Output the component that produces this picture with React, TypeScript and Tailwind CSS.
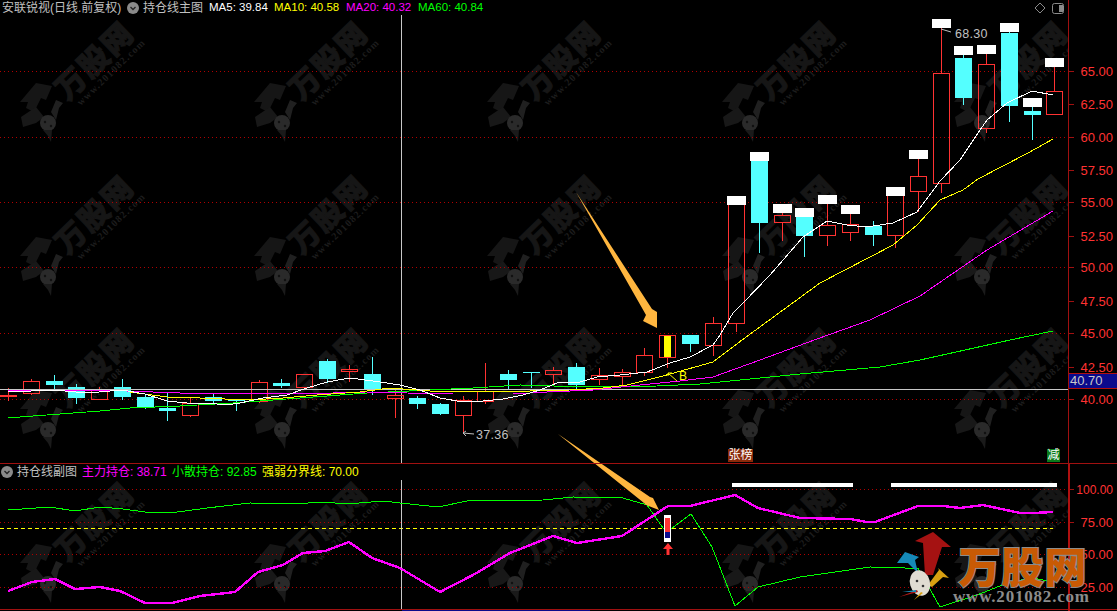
type Candle = { x: number; high: number; top: number; bot: number; low: number; up: boolean; cap?: number };

const c = (x: number, high: number, top: number, bot: number, low: number, up: boolean, cap?: number): Candle => ({ x, high, top, bot, low, up, cap });

const CANDLES: Candle[] = [
  c(8, 388, 395, 396, 401, true),
  c(31, 379, 381, 393, 395, true),
  c(54, 375, 381, 385, 390, false),
  c(76, 384, 387, 398, 404, false),
  c(99, 387, 390, 399, 399, true),
  c(122, 379, 387, 397, 400, false),
  c(145, 395, 397, 407, 409, false),
  c(167, 393, 408, 411, 421, false),
  c(190, 397, 403, 415, 417, true),
  c(213, 394, 397, 401, 403, false),
  c(236, 399, 400, 401, 411, false),
  c(259, 380, 382, 401, 403, true),
  c(281, 379, 383, 386, 388, false),
  c(304, 374, 374, 387, 388, true),
  c(327, 359, 361, 379, 383, false),
  c(349, 365, 369, 371, 382, true),
  c(372, 357, 374, 389, 395, false),
  c(395, 390, 395, 398, 418, true),
  c(417, 396, 398, 404, 409, false),
  c(440, 403, 404, 414, 415, false),
  c(463, 396, 400, 415, 433, true),
  c(485, 363, 391, 401, 404, true),
  c(508, 370, 374, 380, 390, false),
  c(531, 372, 372, 373, 388, false),
  c(553, 367, 370, 374, 385, true),
  c(576, 363, 367, 385, 389, false),
  c(599, 368, 375, 379, 385, true),
  c(622, 369, 372, 376, 385, true),
  c(644, 348, 355, 372, 376, true),
  c(667, 335, 335, 357, 368, true),
  c(690, 335, 335, 344, 352, false),
  c(713, 317, 323, 345, 356, true),
  c(736, 204, 204, 323, 332, true, 196),
  c(759, 161, 161, 223, 253, false, 152),
  c(782, 212, 215, 222, 241, true, 204),
  c(804, 216, 216, 236, 257, false, 208),
  c(827, 203, 225, 235, 246, true, 195),
  c(850, 213, 224, 232, 241, true, 205),
  c(873, 221, 226, 235, 246, false),
  c(895, 195, 195, 235, 248, true, 187),
  c(918, 159, 176, 191, 212, true, 150),
  c(941, 29, 73, 183, 193, true, 19),
  c(963, 56, 58, 98, 105, false, 46),
  c(986, 54, 64, 128, 133, true, 45),
  c(1009, 33, 33, 106, 122, false, 23),
  c(1032, 107, 111, 115, 140, false, 98),
  c(1054, 68, 91, 114, 114, true, 58),
];

const MA5 = "8,392 31,391 54,390 76,392 99,392 122,390 145,394 167,401 187,403 207,403 227,405 240,403 263,398 287,395 307,388 327,382 350,378 380,382 400,385 420,390 440,398 463,402 483,401 503,399 523,395 540,390 557,383 580,382 597,377 620,375 647,372 670,363 690,357 713,345 720,335 733,313 743,303 770,275 803,237 827,221 847,225 867,227 893,223 917,212 940,181 960,160 980,130 987,120 1007,103 1032,91 1053,95";
const MA10 = "130,392 167,397 200,398 250,400 283,398 317,395 360,392 390,388 430,391 473,391 530,391 570,390 603,388 627,385 663,376 713,362 742,340 820,283 870,257 893,245 917,225 940,200 963,190 978,179 1028,153 1053,139";
const MA20 = "8,391 40,390 100,390 180,393 240,393 300,394 366,392 407,393 453,394 513,394 547,392 593,390 640,385 680,381 713,377 760,360 817,339 870,320 920,296 987,250 1053,211";
const MA60 = "8,418 20,417 60,414 100,411 130,408 180,406 233,403 300,398 367,393 430,390 473,388 520,385 587,387 657,386 700,384 760,378 800,374 880,367 920,360 1010,340 1053,331";

const MAIN_LINE = "8,591 32,582 55,579 75,589 100,587 120,591 145,603 172,603 200,596 235,592 258,572 283,565 303,553 325,551 349,542 372,558 400,568 440,592 473,575 510,553 553,536 577,543 622,536 668,506 690,506 735,495 758,508 800,518 850,519 867,522 875,522 918,506 943,506 960,508 983,505 1020,513 1033,513 1053,512";
const RETAIL_A = "8,510 50,507 75,511 100,507 123,509 145,512 170,513 207,508 250,503 293,504 323,502 347,504 383,501 400,503 438,507 467,501 543,500 573,497 623,498 647,505";
const RETAIL_B = "647,505 663,528 672,528 691,514 712,547 735,606 758,587 800,577 870,567 905,568 918,568 940,607 977,595 1010,582 1033,578 1053,582";

const ARROW_MAIN = "576,192 652,309 657,312 657,328 643,321 646,315";
const ARROW_SUB = "558,434 650,497 653,498 659,510 646,505 644,503";

const GRID_MAIN = [71, 137, 202, 267, 333, 399];
const GRID_SUB = [489, 522, 554, 587];
const TILE_X = [6, 240, 473, 708, 940];
const TILE_Y = [20, 174, 327, 481];
const AXIS_MAIN = [
  ["65.00", 71], ["62.50", 104], ["60.00", 137], ["57.50", 170], ["55.00", 202], ["52.50", 236],
  ["50.00", 267], ["47.50", 301], ["45.00", 333], ["42.50", 367], ["40.00", 399],
] as const;
const AXIS_SUB = [["100.00", 489], ["75.00", 522], ["50.00", 554], ["25.00", 587]] as const;

function Watermark({ x, y }: { x: number; y: number }) {
  return (
    <g transform={`translate(${x} ${y})`}>
      <text x={87} y={39} transform="rotate(-44 87 39)" textAnchor="middle" dominantBaseline="central" fontSize={30} fontWeight={900} letterSpacing={2} fill="#161616" stroke="#161616" className="font-['Noto_Sans_CJK_SC',sans-serif]">
        万股网
      </text>
      <text x={105} y={52} transform="rotate(-44 105 52)" textAnchor="middle" dominantBaseline="central" fontSize={10} fontWeight={700} letterSpacing={1.2} fill="#1d1d1d" className="font-['Liberation_Serif',serif]">
        www.201082.com
      </text>
      <polygon points="14,82 30,63 46,66 40,80 35,78 28,92 20,88 22,82" fill="#161616" />
      <polygon points="15,97 30,87 38,97 30,103 17,107" fill="#181818" />
      <polygon points="45,92 50,80 57,83 53,88 50,100" fill="#202020" />
      <circle cx={42} cy={103} r={8} fill="#2a2a2a" />
      <circle cx={39} cy={102} r={1.2} fill="#111" />
      <circle cx={45} cy={106} r={1.2} fill="#111" />
      <polygon points="37,110 46,110 45,122 42,116" fill="#1a1a1a" />
    </g>
  );
}

function Watermarks() {
  return (
    <>
      {TILE_Y.map((y) => TILE_X.map((x) => <Watermark key={`${x}-${y}`} x={x} y={y} />))}
    </>
  );
}

function CandleMark({ d }: { d: Candle }) {
  const color = d.up ? "#ff3232" : "#54ffff";
  return (
    <g shapeRendering="crispEdges">
      <line x1={d.x} x2={d.x} y1={d.cap ?? d.high} y2={d.top} stroke={color} />
      <line x1={d.x} x2={d.x} y1={d.bot} y2={d.low} stroke={color} />
      {d.up ? (
        <rect x={d.x - 8} y={d.top} width={16} height={d.bot - d.top} fill="none" stroke={color} />
      ) : (
        <rect x={d.x - 8.5} y={d.top} width={17} height={Math.max(d.bot - d.top, 1)} fill={color} />
      )}
      {d.cap !== undefined && <rect x={d.x - 9.5} y={d.cap} width={19} height={9} fill="#fff" />}
    </g>
  );
}

function MainChart() {
  return (
    <svg viewBox="0 0 1068 463" className="w-[1068px] h-[463px] block">
      <Watermarks />
      {GRID_MAIN.map((y) => (
        <line key={y} x1={0} x2={1068} y1={y} y2={y} stroke="#b00000" strokeDasharray="1 3" shapeRendering="crispEdges" />
      ))}
      <line x1={401} x2={401} y1={15} y2={463} stroke="#c8c8c8" shapeRendering="crispEdges" />
      {CANDLES.map((d) => (
        <CandleMark key={d.x} d={d} />
      ))}
      <rect x={664} y={336} width={7} height={21} fill="#ffff00" shapeRendering="crispEdges" />
      <line x1={0} x2={1068} y1={389} y2={389} stroke="#c8c8c8" shapeRendering="crispEdges" />
      <g fill="none" shapeRendering="crispEdges">
        <polyline points={MA60} stroke="#00ff00" />
        <polyline points={MA20} stroke="#ff00ff" />
        <polyline points={MA10} stroke="#ffff00" />
        <polyline points={MA5} stroke="#ffffff" />
      </g>
      <polyline points="668,373 677,381" stroke="#ffff00" fill="none" />
      <polyline points="668,376 668,373 672,373" stroke="#ffff00" fill="none" />
      <text x={679} y={380} fontSize={12} fill="#ffff00">B</text>
      <polyline points="463,433 474,434" stroke="#c0c0c0" fill="none" />
      <polyline points="466,431 463,433 466,436" stroke="#c0c0c0" fill="none" />
      <text x={476} y={439} fontSize={12.5} letterSpacing={0.3} fill="#c0c0c0">37.36</text>
      <polyline points="941,29 951,32" stroke="#c0c0c0" fill="none" />
      <text x={955} y={38} fontSize={12.5} letterSpacing={0.3} fill="#c0c0c0">68.30</text>
      <polygon points={ARROW_MAIN} fill="#ffb63f" />
      <polygon points={ARROW_SUB} fill="#ffb63f" />
      <polygon points="1040,3 1045,8 1040,13 1035,8" fill="none" stroke="#8a8a8a" />
      <rect x={1052.5} y={3.5} width={11} height={10} rx={2} fill="#000" stroke="#8a8a8a" />
      <rect x={1059} y={5} width={4} height={7} fill="#8a8a8a" />
    </svg>
  );
}

function SubChart() {
  return (
    <svg viewBox="0 464 1068 147" className="w-[1068px] h-[147px] block">
      <Watermarks />
      {GRID_SUB.map((y) => (
        <line key={y} x1={0} x2={1068} y1={y} y2={y} stroke="#b00000" strokeDasharray="1 3" shapeRendering="crispEdges" />
      ))}
      <line x1={0} x2={1053} y1={528} y2={528} stroke="#ffff00" strokeDasharray="4 3" shapeRendering="crispEdges" />
      <line x1={401} x2={401} y1={480} y2={609} stroke="#c8c8c8" shapeRendering="crispEdges" />
      <g fill="none" shapeRendering="crispEdges">
        <polyline points={RETAIL_A} stroke="#00ff00" />
        <polyline points={RETAIL_B} stroke="#00ff00" />
        <polyline points={MAIN_LINE} stroke="#ff00ff" strokeWidth={2.4} />
      </g>
      <polygon points={ARROW_SUB} fill="#ffb63f" />
      <g shapeRendering="crispEdges">
        <rect x={732} y={483} width={121} height={4} fill="#fff" />
        <rect x={891} y={483} width={166} height={4} fill="#fff" />
        <rect x={664} y={515} width={7} height={27} fill="#fff" />
        <rect x={665} y={518} width={5} height={14} fill="#ff3232" />
        <rect x={665} y={532} width={5} height={6} fill="#0a0a8c" />
      </g>
      <polygon points="668,543 673,549 669.5,549 669.5,555 666.5,555 666.5,549 663,549" fill="#ff3232" />
      <line x1={0} x2={1068} y1={609} y2={609} stroke="#a01010" shapeRendering="crispEdges" />
      <line x1={402} x2={590} y1={610} y2={610} stroke="#0a0a8c" shapeRendering="crispEdges" />
    </svg>
  );
}

function AxisMain() {
  return (
    <div className="relative w-[49px] h-[463px] border-l border-[#a01010]">
      <svg viewBox="1069 0 48 463" className="w-[48px] h-[463px] block">
        {AXIS_MAIN.map(([t, y]) => (
          <g key={t}>
            <line x1={1069} x2={1074} y1={y} y2={y} stroke="#a01010" shapeRendering="crispEdges" />
            <text x={1113} y={y + 5} textAnchor="end" fontSize={13} fill="#ff3232">{t}</text>
          </g>
        ))}
      </svg>
      <div className="absolute left-0 top-[373px] w-[49px] h-[16px] bg-[#0a0a8c] border-y border-[#b01010] text-[13px] leading-[14px] text-[#c8c8c8] pl-[1px]">
        40.70
      </div>
    </div>
  );
}

function AxisSub() {
  return (
    <div className="w-[49px] h-[147px] border-l-2 border-[#b01010]">
      <svg viewBox="1070 464 47 147" className="w-[47px] h-[147px] block">
        {AXIS_SUB.map(([t, y]) => (
          <g key={t}>
            <line x1={1070} x2={1074} y1={y} y2={y} stroke="#a01010" shapeRendering="crispEdges" />
            <text x={1113} y={y + 5} textAnchor="end" fontSize={t === "100.00" ? 12 : 13} fill="#ff3232">{t}</text>
          </g>
        ))}
        <line x1={1070} x2={1117} y1={609} y2={609} stroke="#a01010" shapeRendering="crispEdges" />
      </svg>
    </div>
  );
}

function Dropdown() {
  return (
    <span className="w-3 h-3 rounded-full bg-[#8a8a8a] flex items-center justify-center shrink-0">
      <svg viewBox="0 0 8 8" className="w-2 h-2">
        <path d="M1.5 3 L4 5.5 L6.5 3" fill="none" stroke="#222" strokeWidth={1.3} />
      </svg>
    </span>
  );
}

function Logo() {
  return (
    <div className="absolute left-[897px] top-[530px] w-[200px] h-[76px] flex items-start pointer-events-none">
      <svg viewBox="897 530 61 70" className="w-[61px] h-[70px] shrink-0">
        <polygon points="915,541 933,532 951,547 942,547 933,575 925,575 923,543" fill="#a51212" />
        <polygon points="897,563 905,552 919,557 915,560 918,573 908,563" fill="#1689b8" />
        <polygon points="928,585 939,570 938,568 949,578 943,577 932,587" fill="#d9a011" />
        <ellipse cx={920} cy={583} rx={10} ry={13} transform="rotate(-15 920 583)" fill="#e0dcd2" />
        <circle cx={917} cy={581} r={1.3} fill="#333" />
        <circle cx={923} cy={586} r={1.3} fill="#333" />
        <polygon points="899,597 917,590 918,592" fill="#b01818" />
        <polygon points="902,592 916,590 916,592" fill="#1a86b0" />
        <polygon points="914,600 921,592 923,593" fill="#d9a011" />
      </svg>
      <div className="absolute left-[61px] top-[12px] w-[130px] text-center text-[42px] leading-[46px] font-black tracking-[1px] text-[#c85a04] [-webkit-text-stroke:2px_#8c8c8c] [paint-order:stroke_fill] font-['Noto_Sans_CJK_SC',sans-serif] whitespace-nowrap">
        万股网
      </div>
      <div className="absolute left-[56px] top-[59px] text-[17px] leading-[16px] font-bold tracking-[0.8px] text-[#8c8c8c] font-['Liberation_Serif',serif] whitespace-nowrap">
        www.201082.com
      </div>
    </div>
  );
}

export default function App() {
  return (
    <div className="relative w-[1117px] h-[611px] overflow-hidden bg-black font-['Liberation_Sans','Noto_Sans_CJK_SC',sans-serif]">
      <div className="relative flex">
        <MainChart />
        <AxisMain />
        <div className="absolute left-0 top-0 h-[16px] flex items-center text-[12px] whitespace-nowrap text-[#c0c0c0]">
          <span className="ml-[2px] w-[122px]">安联锐视(日线.前复权)</span>
          <span className="ml-[3px]"><Dropdown /></span>
          <span className="ml-[4px] w-[66px]">持仓线主图</span>
          <span className="w-[65px] text-[11.5px] text-white">MA5: 39.84</span>
          <span className="w-[72px] text-[11.5px] text-[#ffff00]">MA10: 40.58</span>
          <span className="w-[72px] text-[11.5px] text-[#ff00ff]">MA20: 40.32</span>
          <span className="text-[11.5px] text-[#00ff00]">MA60: 40.84</span>
        </div>
        <div className="absolute left-[728px] top-[449px] w-[25px] h-[13px] bg-[#8a2a0a] text-white text-[12px] leading-[13px] text-center">张榜</div>
        <div className="absolute left-[1047px] top-[449px] w-[13px] h-[13px] bg-[#0a7a1a] text-white text-[12px] leading-[13px] text-center">减</div>
      </div>
      <div className="h-px bg-[#a01010]" />
      <div className="relative flex">
        <SubChart />
        <AxisSub />
        <div className="absolute left-0 top-0 h-[16px] flex items-center text-[12px] whitespace-nowrap text-[#c0c0c0]">
          <span className="ml-[1px]"><Dropdown /></span>
          <span className="ml-[4px] w-[65px]">持仓线副图</span>
          <span className="w-[90px] text-[#ff00ff]">主力持仓: 38.71</span>
          <span className="w-[90px] text-[#00ff00]">小散持仓: 92.85</span>
          <span className="text-[#ffff00]">强弱分界线: 70.00</span>
        </div>
      </div>
      <Logo />
    </div>
  );
}
